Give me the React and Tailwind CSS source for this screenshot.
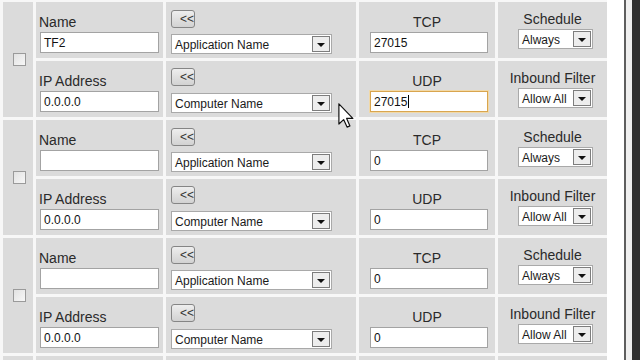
import React from "react";

const groups = [
  { name: "TF2", tcp: "27015", udp: "27015", focus: true },
  { name: "", tcp: "0", udp: "0" },
  { name: "", tcp: "0", udp: "0" },
];

function ArrowBox() {
  return (
    <div className="w-[18px] h-[16px] border border-[#7d7d7d] bg-[#ededed] flex items-end justify-center pb-[4px]">
      <svg width="8" height="4" viewBox="0 0 8 4">
        <path d="M0 0H8L4 4Z" fill="#111" />
      </svg>
    </div>
  );
}

function Select({ text, className }) {
  return (
    <div
      className={
        "h-[20px] bg-white border border-[#a9a9a9] flex items-center justify-between pl-[3px] pr-[1px] text-[12px] text-[#1a1a1a] " +
        className
      }
    >
      <span className="leading-[18px] pt-[1px]">{text}</span>
      <ArrowBox />
    </div>
  );
}

function TextInput({ value, className, focus }) {
  return (
    <div
      className={
        "h-[21px] bg-white flex items-center pl-[3px] text-[12px] text-[#111] " +
        (focus
          ? "border border-[#d9a54e] shadow-[0_0_0_1px_#f1d9a8] "
          : "border border-[#a3a3a3] ") +
        className
      }
    >
      <span className="leading-[18px] pt-[1px]">{value}</span>
      {focus && <span className="w-px h-[13px] bg-black ml-[1px]" />}
    </div>
  );
}

function BackButton() {
  return (
    <div className="w-[24px] h-[18px] rounded-[3px] border border-[#858585] bg-gradient-to-b from-[#eeeeee] to-[#d2d2d2] overflow-hidden flex items-center pl-[8px] text-[12px] leading-none text-[#333] whitespace-nowrap">
      &lt;&lt;
    </div>
  );
}

function Label({ children, center }) {
  return (
    <div
      className={
        "text-[14px] leading-[16px] text-[#2a2a2a] whitespace-nowrap " +
        (center ? "text-center" : "")
      }
    >
      {children}
    </div>
  );
}

const cell = "bg-[#dbdbdb]";

export default function App() {
  return (
    <div className="w-[640px] h-[360px] overflow-hidden flex bg-white font-['Liberation_Sans',Arial,sans-serif]">
      <div className="w-[607px] h-[360px] bg-[#f7f7f7] pl-[3px] pt-[2px] grid grid-cols-[30px_127px_190px_136px_109px] auto-rows-[56px] gap-[3px] shrink-0">
        {groups.map((g, i) => (
          <React.Fragment key={i}>
            <div className={cell + " row-span-2 flex items-center justify-center pl-[2px]"}>
              <div className="w-[13px] h-[13px] border border-[#9a9a9a] bg-gradient-to-br from-[#e2e2e2] to-[#f7f7f7]" />
            </div>
            <div className={cell + " pt-[12px] pl-[3px]"}>
              <Label>Name</Label>
              <TextInput value={g.name} className="mt-[2px] ml-[1px] w-[119px]" />
            </div>
            <div className={cell + " pt-[8px] pl-[5px]"}>
              <BackButton />
              <Select text="Application Name" className="mt-[6px] w-[161px]" />
            </div>
            <div className={cell + " pt-[12px]"}>
              <Label center>TCP</Label>
              <TextInput value={g.tcp} className="mt-[2px] ml-[11px] w-[118px]" />
            </div>
            <div className={cell + " pt-[9px]"}>
              <Label center>Schedule</Label>
              <Select text="Always" className="mt-[2px] ml-[20px] w-[75px] h-[19px]" />
            </div>

            <div className={cell + " col-start-2 pt-[12px] pl-[3px]"}>
              <Label>IP Address</Label>
              <TextInput value="0.0.0.0" className="mt-[2px] ml-[1px] w-[119px]" />
            </div>
            <div className={cell + " pt-[7px] pl-[5px]"}>
              <BackButton />
              <Select text="Computer Name" className="mt-[7px] w-[161px]" />
            </div>
            <div className={cell + " pt-[12px]"}>
              <Label center>UDP</Label>
              <TextInput
                value={g.udp}
                focus={g.focus}
                className="mt-[2px] ml-[11px] w-[118px]"
              />
            </div>
            <div className={cell + " pt-[9px]"}>
              <Label center>Inbound Filter</Label>
              <Select text="Allow All" className="mt-[2px] ml-[20px] w-[75px] h-[19px]" />
            </div>
          </React.Fragment>
        ))}
        <div className={cell} />
        <div className={cell} />
        <div className={cell} />
        <div className={cell} />
        <div className={cell} />
      </div>
      <div className="w-[17px] h-full bg-white shrink-0" />
      <div className="w-[2px] h-full bg-[#5e5e5e] shrink-0" />
      <div className="w-[6px] h-full bg-[#efefef] shrink-0" />
      <div className="flex-1 h-full bg-[#303030]" />

      <svg
        className="absolute left-[338px] top-[103px]"
        width="16"
        height="25"
        viewBox="0 0 12 19"
      >
        <path
          d="M0.6 0.6 V16 L4.2 12.6 L6.8 18.3 L9 17.4 L6.5 11.7 H11.2 Z"
          fill="#fff"
          stroke="#111"
          strokeWidth="0.9"
          strokeLinejoin="round"
        />
      </svg>
    </div>
  );
}
